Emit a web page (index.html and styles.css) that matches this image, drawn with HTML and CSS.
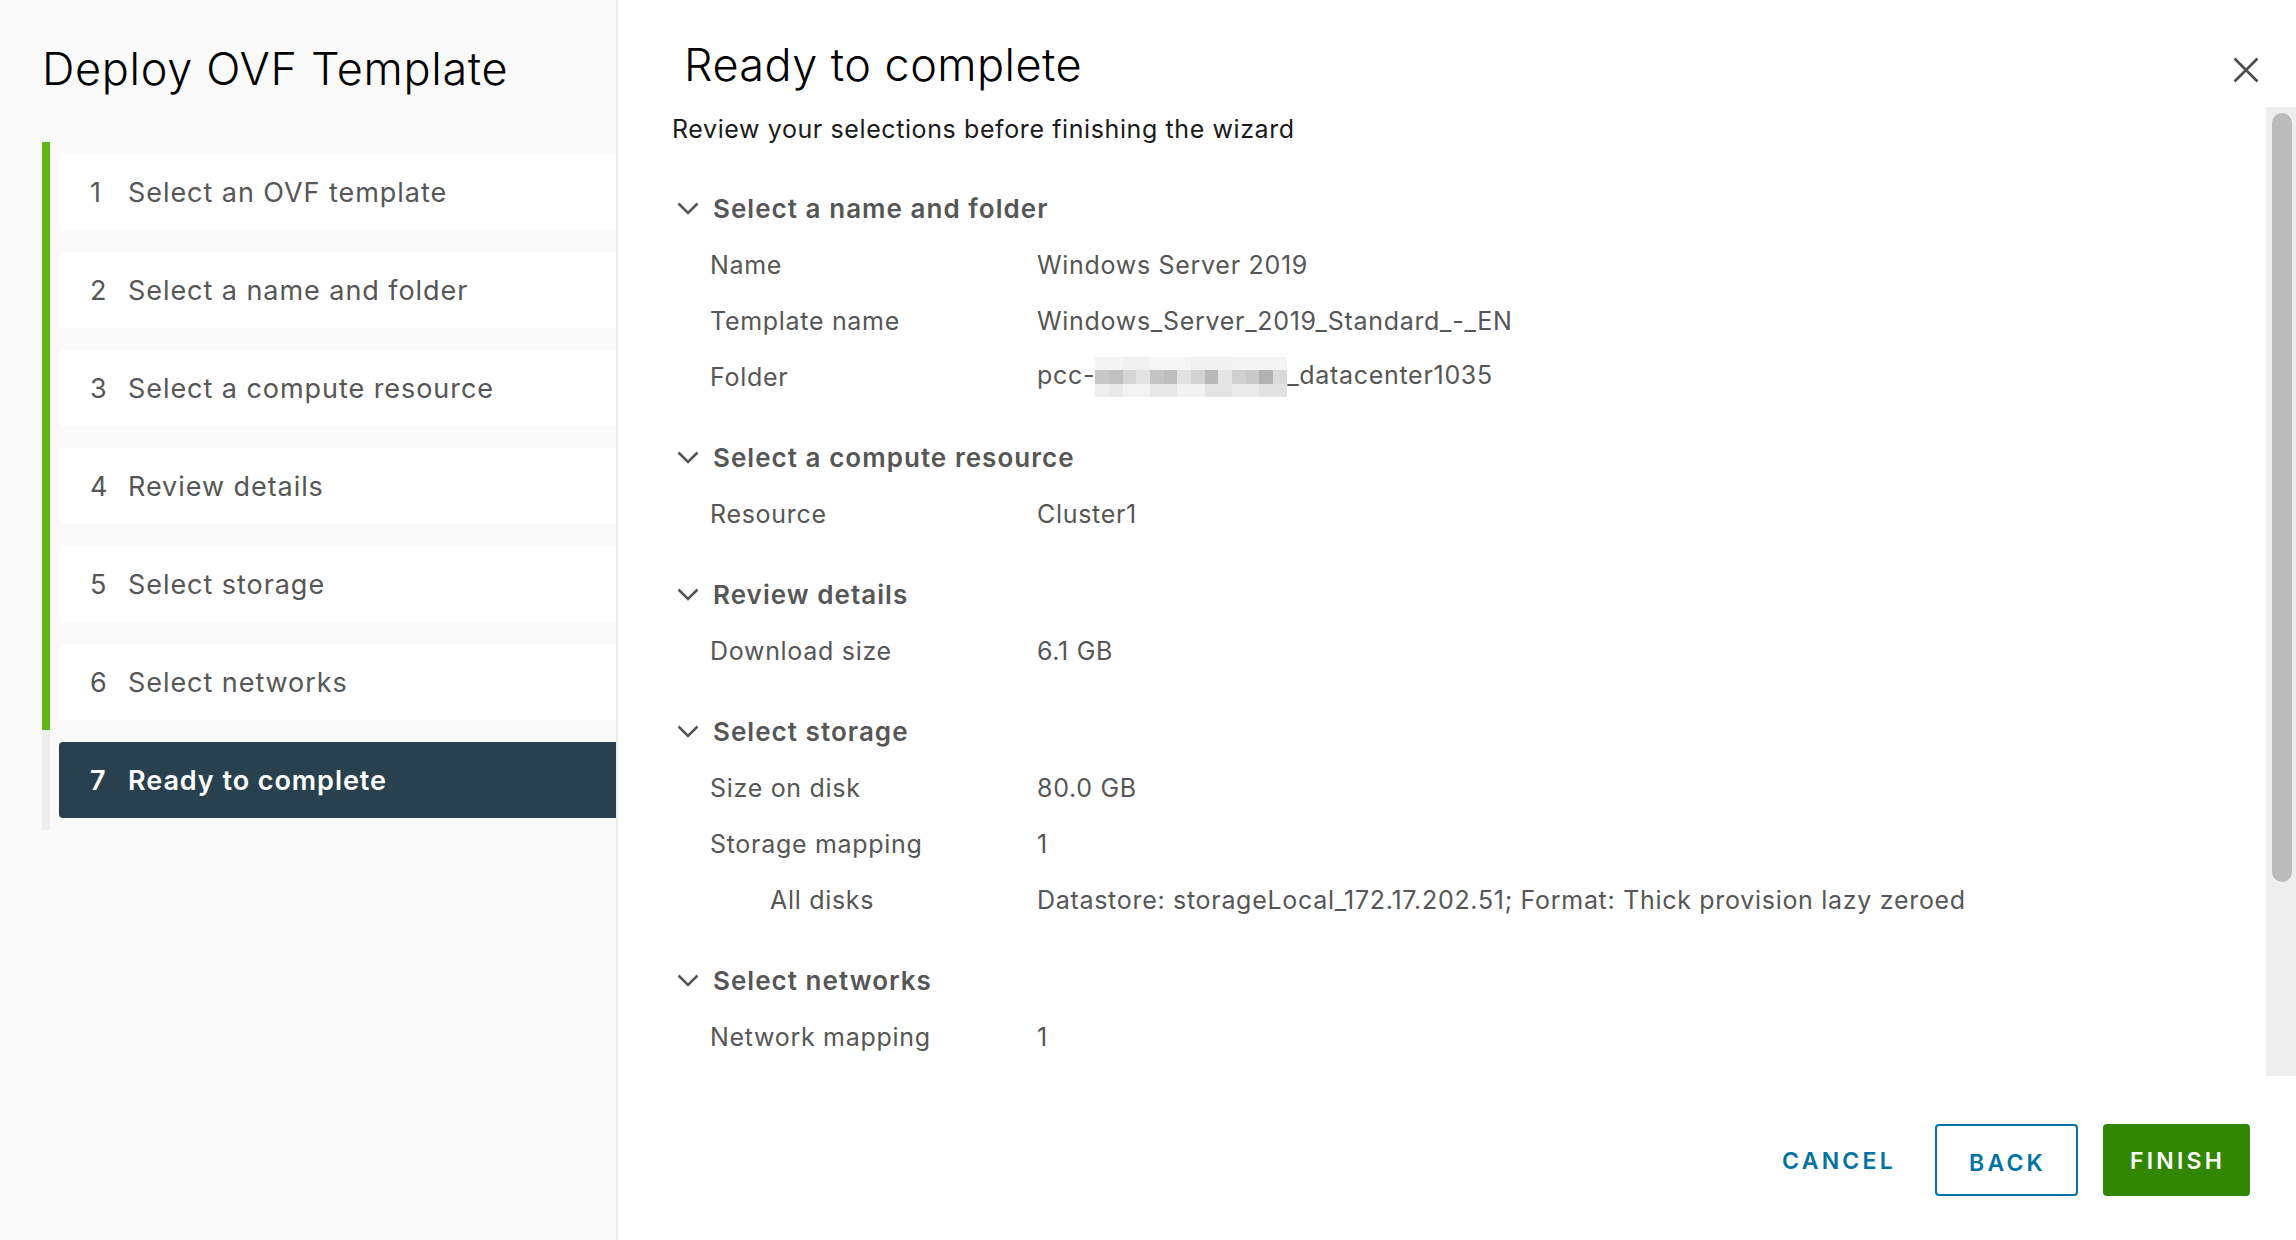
FILE: index.html
```html
<!DOCTYPE html>
<html>

	<head>
		<meta charset="UTF-8">
		<title>Deploy OVF Template</title>
		<link rel="stylesheet" href="styles.css">
	</head>

	<body>
		<div class="modal">
			<aside class="wizard-nav">
				<h1 class="wizard-title">Deploy OVF Template</h1>
				<ol class="steps">
					<li class="step done"><div class="step-box"><span class="num">1</span>Select an OVF template</div></li>
					<li class="step done"><div class="step-box"><span class="num">2</span>Select a name and folder</div></li>
					<li class="step done"><div class="step-box"><span class="num">3</span>Select a compute resource</div></li>
					<li class="step done"><div class="step-box"><span class="num">4</span>Review details</div></li>
					<li class="step done"><div class="step-box"><span class="num">5</span>Select storage</div></li>
					<li class="step done"><div class="step-box"><span class="num">6</span>Select networks</div></li>
					<li class="step current"><div class="step-box active"><span class="num">7</span>Ready to complete</div></li>
				</ol>
			</aside>

			<main class="wizard-main">
				<header class="main-head">
					<h2 class="page-title">Ready to complete</h2>
					<button class="close" title="Close">
						<svg width="26" height="26" viewBox="0 0 26 26"><path d="M1.5 1.5L24.5 24.5M24.5 1.5L1.5 24.5" stroke="#4d4d4d" stroke-width="2.6" fill="none"/></svg>
					</button>
				</header>

				<div class="body-row">
					<div class="scroll">
						<p class="lead">Review your selections before finishing the wizard</p>

						<section class="group">
							<h3 class="group-head"><svg class="chev" width="22" height="13" viewBox="0 0 22 13"><path d="M1.5 1.5L11 11L20.5 1.5" stroke="#565656" stroke-width="2.6" fill="none"/></svg>Select a name and folder</h3>
							<div class="row"><span class="label">Name</span><span class="value">Windows Server 2019</span></div>
							<div class="row"><span class="label">Template name</span><span class="value">Windows_Server_2019_Standard_-_EN</span></div>
							<div class="row"><span class="label">Folder</span><span class="value">pcc-<span class="redact"></span>_datacenter1035</span></div>
						</section>

						<section class="group">
							<h3 class="group-head"><svg class="chev" width="22" height="13" viewBox="0 0 22 13"><path d="M1.5 1.5L11 11L20.5 1.5" stroke="#565656" stroke-width="2.6" fill="none"/></svg>Select a compute resource</h3>
							<div class="row"><span class="label">Resource</span><span class="value">Cluster1</span></div>
						</section>

						<section class="group">
							<h3 class="group-head"><svg class="chev" width="22" height="13" viewBox="0 0 22 13"><path d="M1.5 1.5L11 11L20.5 1.5" stroke="#565656" stroke-width="2.6" fill="none"/></svg>Review details</h3>
							<div class="row"><span class="label">Download size</span><span class="value">6.1 GB</span></div>
						</section>

						<section class="group">
							<h3 class="group-head"><svg class="chev" width="22" height="13" viewBox="0 0 22 13"><path d="M1.5 1.5L11 11L20.5 1.5" stroke="#565656" stroke-width="2.6" fill="none"/></svg>Select storage</h3>
							<div class="row"><span class="label">Size on disk</span><span class="value">80.0 GB</span></div>
							<div class="row"><span class="label">Storage mapping</span><span class="value">1</span></div>
							<div class="row sub"><span class="label">All disks</span><span class="value">Datastore: storageLocal_172.17.202.51; Format: Thick provision lazy zeroed</span></div>
						</section>

						<section class="group">
							<h3 class="group-head"><svg class="chev" width="22" height="13" viewBox="0 0 22 13"><path d="M1.5 1.5L11 11L20.5 1.5" stroke="#565656" stroke-width="2.6" fill="none"/></svg>Select networks</h3>
							<div class="row"><span class="label">Network mapping</span><span class="value">1</span></div>
						</section>
					</div>
					<div class="scrollbar"><div class="thumb"></div></div>
				</div>

				<footer class="main-foot">
					<button class="btn btn-link">Cancel</button>
					<button class="btn btn-outline">Back</button>
					<button class="btn btn-success">Finish</button>
				</footer>
			</main>
		</div>
	</body>

</html>
```

FILE: styles.css
```css
html, body {
	margin: 0;
	padding: 0;
}

body {
	width: 2296px;
	height: 1240px;
	overflow: hidden;
	background: #fff;
	font-family: Inter, "Liberation Sans", sans-serif;
	color: #565656;
}

.modal {
	display: flex;
	height: 1240px;
}

/* left column */
.wizard-nav {
	width: 616px;
	flex: none;
	background: #fafafa;
	border-right: 2px solid #e8e8e8;
}

.wizard-title {
	margin: 46px 0 0 42px;
	font-size: 45px;
	line-height: 45px;
	font-weight: 300;
	color: #000;
	letter-spacing: 0.015em;
}

.steps {
	list-style: none;
	margin: 51px 0 0 42px;
	padding: 0;
}

.step {
	padding: 12px 0 10px 9px;
	border-left: 8px solid #60b515;
}

.step.current {
	border-left-color: #eeeeee;
	padding-bottom: 12px;
}

.step-box {
	display: flex;
	align-items: center;
	height: 76px;
	padding-left: 31px;
	background: #fff;
	border-radius: 4px 0 0 4px;
	font-size: 27px;
	letter-spacing: 0.035em;
	color: #565656;
}

.step-box .num {
	width: 38px;
	letter-spacing: 0;
}

.step-box.active {
	background: #29414e;
	color: #fff;
	font-weight: 600;
}

/* right column */
.wizard-main {
	flex: 1;
	display: flex;
	flex-direction: column;
	height: 1240px;
	min-width: 0;
}

.main-head {
	display: flex;
	align-items: flex-start;
	height: 107px;
	flex: none;
}

.page-title {
	margin: 42px 0 0 66px;
	font-size: 45px;
	line-height: 45px;
	font-weight: 300;
	color: #000;
	letter-spacing: 0.01em;
}

.close {
	margin: 57px 37px 0 auto;
	width: 26px;
	height: 26px;
	padding: 0;
	border: 0;
	background: none;
	cursor: pointer;
}

.close svg {
	display: block;
}

.body-row {
	flex: 1;
	display: flex;
	min-height: 0;
}

.scroll {
	flex: 1;
	overflow: hidden;
	padding: 4px 0 0 54px;
}

.scrollbar {
	width: 30px;
	flex: none;
	box-sizing: border-box;
	padding: 6px 4px 0 6px;
	background: #eeeeee;
}

.thumb {
	height: 769px;
	background: #bbbbbb;
	border-radius: 10px;
}

.lead {
	margin: 0;
	font-size: 25px;
	line-height: 36px;
	letter-spacing: 0.024em;
	color: #1a1a1a;
}

.group {
	margin-top: 24px;
}

.lead + .group {
	margin-top: 33px;
}

.group-head {
	display: flex;
	align-items: center;
	height: 57px;
	margin: 0;
	font-size: 26px;
	font-weight: 600;
	letter-spacing: 0.04em;
	color: #565656;
}

.chev {
	margin: 0 14px 0 5px;
}

.row {
	display: flex;
	align-items: center;
	height: 56px;
	padding-left: 38px;
	font-size: 25px;
	letter-spacing: 0.028em;
	color: #565656;
}

.row .label {
	width: 327px;
	flex: none;
}

.row.sub {
	padding-left: 98px;
}

.row.sub .label {
	width: 267px;
}

.redact {
	display: inline-block;
	width: 192px;
	height: 40px;
	vertical-align: middle;
	background:
		linear-gradient(90deg, #c8c8c8 0 14px, #c0c0c0 14px 28px, #d5d5d5 28px 41px, #e3e3e3 41px 55px, #c4c4c4 55px 69px, #bdbdbd 69px 82px, #e2e2e2 82px 96px, #d3d3d3 96px 110px, #b9b9b9 110px 123px, #e5e5e5 123px 137px, #d0d0d0 137px 151px, #c9c9c9 151px 164px, #b2b2b2 164px 178px, #dadada 178px 192px) 0 13px / 100% 14px no-repeat,
		linear-gradient(90deg, #f4f4f4 0 28px, #f0f0f0 28px 55px, #f6f6f6 55px 96px, #f1f1f1 96px 137px, #f5f5f5 137px 192px) 0 0 / 100% 13px no-repeat,
		linear-gradient(90deg, #eeeeee 0 14px, #e9e9e9 14px 28px, #f3f3f3 28px 55px, #e7e7e7 55px 82px, #f2f2f2 82px 110px, #e4e4e4 110px 137px, #ebebeb 137px 164px, #e2e2e2 164px 192px) 0 27px / 100% 13px no-repeat;
}

/* footer buttons */
.main-foot {
	display: flex;
	justify-content: flex-end;
	align-items: flex-start;
	height: 164px;
	flex: none;
	padding: 48px 46px 0 0;
	box-sizing: border-box;
}

.btn {
	height: 72px;
	padding: 0 0 0 2px;
	border-radius: 4px;
	font-family: Inter, "Liberation Sans", sans-serif;
	font-size: 23px;
	line-height: 74px;
	font-weight: 600;
	letter-spacing: 0.14em;
	text-transform: uppercase;
	cursor: pointer;
}

.btn-link {
	width: 170px;
	margin-right: 12px;
	border: 0;
	background: none;
	color: #0072a3;
}

.btn-outline {
	width: 143px;
	margin-right: 25px;
	border: 2px solid #0072a3;
	background: #fff;
	color: #0072a3;
}

.btn-success {
	width: 147px;
	border: 0;
	background: #318700;
	color: #fff;
}
```
